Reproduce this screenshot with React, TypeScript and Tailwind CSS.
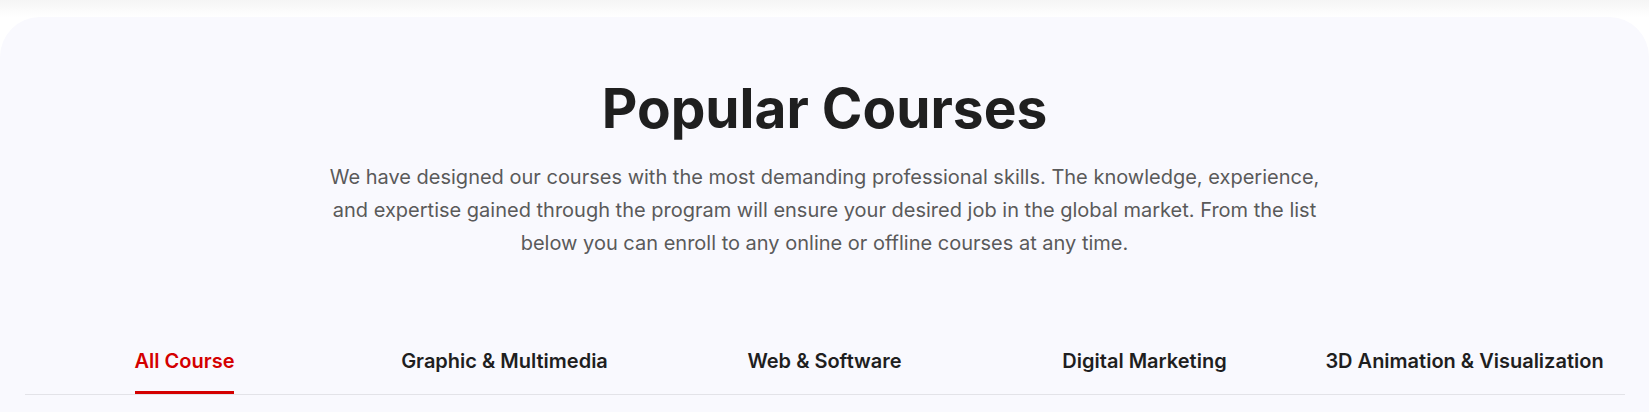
import React from "react";

const tabs = [
  "All Course",
  "Graphic & Multimedia",
  "Web & Software",
  "Digital Marketing",
  "3D Animation & Visualization",
];

export default function App() {
  return (
    <div className="min-h-[412px] w-full bg-white" style={{ fontFamily: "Inter, 'Noto Sans', sans-serif" }}>
      <div className="h-[17px] bg-gradient-to-b from-[#f5f5f5] to-[#ffffff]" />
      <section className="rounded-t-[40px] bg-[#f9f9fe] pt-[58px] pb-10">
        <h1 className="text-center text-[55px] font-bold leading-[1.2] text-[#1f1f1f]">
          Popular Courses
        </h1>
        <p className="mx-auto mt-5 max-w-[1000px] text-center text-[20px] leading-[33px] text-[#5a5a5a]">
          We have designed our courses with the most demanding professional skills. The knowledge, experience, and
          expertise gained through the program will ensure your desired job in the global market. From the list below
          you can enroll to any online or offline courses at any time.
        </p>
        <div className="mx-auto mt-[87px] grid max-w-[1600px] grid-cols-5 border-b border-[#e3e3e8]">
          {tabs.map((t, i) => (
            <div key={t} className="flex justify-center">
              <button
                className={
                  i === 0
                    ? "border-b-[3px] border-[#d40000] pb-[16px] text-[20px] font-semibold leading-[28px] text-[#d40000]"
                    : "border-b-[3px] border-transparent pb-[16px] text-[20px] font-semibold leading-[28px] text-[#1f1f1f]"
                }
              >
                {t}
              </button>
            </div>
          ))}
        </div>
      </section>
    </div>
  );
}
